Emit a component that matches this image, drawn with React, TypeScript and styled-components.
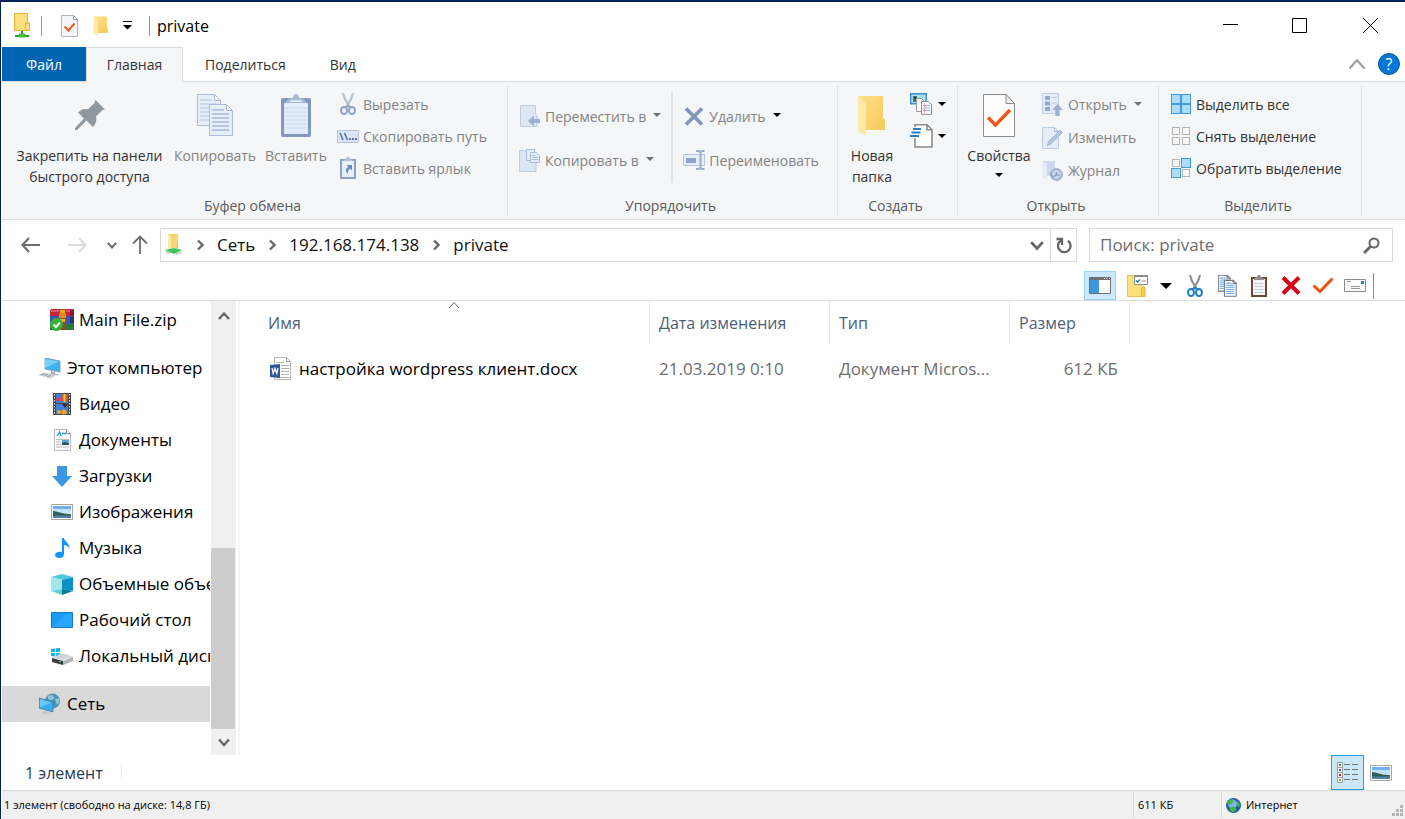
import React from "react";
import styled, { createGlobalStyle, css } from "styled-components";

const GlobalStyle = createGlobalStyle`
  *, *::before, *::after { box-sizing: border-box; }
  body { margin: 0; background: #fff; }
  body, button, input {
    font-family: "Open Sans", "Noto Sans", sans-serif;
  }
  svg { display: block; flex: none; }
`;

const plainButton = css`
  appearance: none;
  border: 0;
  margin: 0;
  padding: 0;
  background: none;
  color: inherit;
  font-size: inherit;
  line-height: inherit;
  cursor: default;
`;

const Window = styled.div`
  display: flex;
  flex-direction: column;
  min-height: 100vh;
  padding-left: 1px;
  border-top: 2px solid #02215a;
  border-left: 1px solid #02215a;
  background: #fff;
  color: #000;
`;

/* ---------- title bar ---------- */

const TitleBar = styled.header`
  display: flex;
  align-items: center;
  height: 45px;
  padding: 2px 0 0 8px;
`;

const QuickButton = styled.button<{ $w: number }>`
  ${plainButton}
  display: flex;
  align-items: center;
  justify-content: center;
  width: ${(p) => p.$w}px;
  height: 30px;
`;

const TitleRule = styled.span`
  width: 1px;
  height: 20px;
  margin: 0 7px;
  background: #969696;
`;

const Title = styled.h1`
  flex: 1;
  margin: 0;
  font-size: 16px;
  line-height: 24px;
  font-weight: 400;
`;

const CaptionButton = styled.button`
  ${plainButton}
  display: flex;
  align-items: center;
  justify-content: center;
  width: 70px;
  height: 40px;
`;

/* ---------- tabs ---------- */

const TabRow = styled.nav`
  display: flex;
  align-items: stretch;
  height: 34px;
  font-size: 14px;
  line-height: 20px;
  color: #333;
`;

const Tab = styled.button<{ $kind?: "file" | "active" }>`
  ${plainButton}
  padding: 1px 22px 0;
  ${(p) =>
    p.$kind === "file" &&
    css`
      width: 84px;
      background: #0066b4;
      color: #fff;
    `}
  ${(p) =>
    p.$kind === "active" &&
    css`
      position: relative;
      width: 97px;
      height: 35px;
      padding: 0;
      background: #f5f6f7;
      border: 1px solid #dadbdc;
      border-bottom: 0;
    `}
`;

const TabTools = styled.div`
  display: flex;
  align-items: center;
  gap: 12px;
  margin-left: auto;
  padding-right: 5px;
`;

const HelpButton = styled.button`
  ${plainButton}
  width: 22px;
  height: 22px;
  border: 1px solid #005a9e;
  border-radius: 50%;
  background: #0078d7;
  color: #fff;
  font-size: 16px;
  line-height: 20px;
  font-weight: 500;
`;

/* ---------- ribbon ---------- */

const Ribbon = styled.section`
  display: flex;
  height: 139px;
  background: #f5f6f7;
  border-top: 1px solid #dadbdc;
  border-bottom: 1px solid #dadbdc;
  font-size: 14px;
  line-height: 21px;
`;

const Group = styled.div<{ $w: number }>`
  display: flex;
  flex-direction: column;
  width: ${(p) => p.$w}px;
  margin: 3px 0;
  border-right: 1px solid #e2e3e4;
`;

const GroupBody = styled.div<{ $pad: number }>`
  display: flex;
  flex: 1;
  padding-left: ${(p) => p.$pad}px;
`;

const GroupLabel = styled.div`
  height: 21px;
  padding-right: 4px;
  text-align: center;
  color: #5a5a5a;
`;

const BigButton = styled.button<{ $w: number; $off?: boolean }>`
  ${plainButton}
  display: flex;
  flex-direction: column;
  align-items: center;
  width: ${(p) => p.$w}px;
  padding-top: 6px;
  color: ${(p) => (p.$off ? "#838383" : "#333")};
  white-space: nowrap;
`;

const BigIcon = styled.span`
  display: flex;
  align-items: center;
  height: 48px;
  margin-bottom: 6px;
`;

const CaretLine = styled.span`
  display: flex;
  align-items: center;
  height: 18px;
`;

const SmallColumn = styled.div<{ $top?: number; $left?: number }>`
  display: flex;
  flex-direction: column;
  align-items: flex-start;
  padding-top: ${(p) => p.$top ?? 3}px;
  padding-left: ${(p) => p.$left ?? 0}px;
`;

const SmallButton = styled.button<{ $h?: number; $off?: boolean }>`
  ${plainButton}
  display: flex;
  align-items: center;
  gap: 5px;
  height: ${(p) => p.$h ?? 32}px;
  color: ${(p) => (p.$off ? "#838383" : "#333")};
  white-space: nowrap;
`;

const IconSlot = styled.span`
  display: flex;
  justify-content: center;
  width: 21px;
`;

const CaretSlot = styled.span`
  display: flex;
  padding: 0 0 2px 2px;
`;

const InnerRule = styled.span`
  width: 2px;
  height: 91px;
  margin: 7px 10px 0 10px;
  background: #e2e3e4;
`;

/* ---------- address row ---------- */

const AddressRow = styled.div`
  display: flex;
  align-items: center;
  height: 50px;
  padding: 0 12px 0 9px;
  color: #111;
`;

const NavButton = styled.button<{ $w: number }>`
  ${plainButton}
  display: flex;
  align-items: center;
  justify-content: center;
  width: ${(p) => p.$w}px;
  height: 32px;
`;

const PathBox = styled.div`
  display: flex;
  flex: 1;
  align-items: center;
  height: 34px;
  padding-left: 4px;
  border: 1px solid #d9d9d9;
`;

const Crumb = styled.button`
  ${plainButton}
  font-size: 17px;
  line-height: 24px;
`;

const CrumbSep = styled.span`
  display: flex;
  justify-content: center;
  width: 34px;
`;

const PathButtons = styled.div`
  display: flex;
  margin-left: auto;
`;

const PathButton = styled.button<{ $rule?: boolean }>`
  ${plainButton}
  display: flex;
  align-items: center;
  justify-content: center;
  width: 26px;
  height: 32px;
  border-left: ${(p) => (p.$rule ? "1px solid #d9d9d9" : "0")};
`;

const SearchBox = styled.label`
  display: flex;
  align-items: center;
  width: 304px;
  height: 34px;
  margin-left: 12px;
  padding: 0 12px 0 10px;
  border: 1px solid #d9d9d9;
`;

const SearchInput = styled.input`
  flex: 1;
  min-width: 0;
  padding: 0;
  border: 0;
  outline: 0;
  background: none;
  font-size: 17px;
  line-height: 24px;
  &::placeholder { color: #6d6d6d; opacity: 1; }
`;

/* ---------- command bar ---------- */

const CommandBar = styled.div`
  display: flex;
  justify-content: flex-end;
  align-items: flex-end;
  height: 31px;
  padding-right: 31px;
  border-bottom: 1px solid #dadbdc;
`;

const CommandButton = styled.button<{ $active?: boolean; $wide?: boolean }>`
  ${plainButton}
  display: flex;
  align-items: center;
  justify-content: center;
  gap: 11px;
  width: ${(p) => (p.$wide ? 63 : 32)}px;
  height: 29px;
  padding-left: ${(p) => (p.$wide ? 3 : 0)}px;
  ${(p) =>
    p.$active &&
    css`
      background: #cce8ff;
      border: 1px solid #99d1ff;
    `}
`;

const CommandRule = styled.span`
  width: 1px;
  height: 26px;
  margin: 0 0 1px 2px;
  background: #8c8c8c;
`;

/* ---------- body ---------- */

const Body = styled.div`
  display: flex;
  flex: 1;
  min-height: 0;
`;

const Tree = styled.ul`
  width: 208px;
  margin: 0;
  padding: 1px 0 0;
  list-style: none;
  overflow: hidden;
`;

const TreeItem = styled.li<{ $gap?: boolean }>`
  margin-top: ${(p) => (p.$gap ? 12 : 0)}px;
`;

const TreeButton = styled.button<{ $root?: boolean; $selected?: boolean }>`
  ${plainButton}
  display: flex;
  align-items: center;
  gap: 5px;
  width: 100%;
  height: 36px;
  padding-left: ${(p) => (p.$root ? 36 : 48)}px;
  background: ${(p) => (p.$selected ? "#d9d9d9" : "none")};
  font-size: 17px;
  line-height: 24px;
  white-space: nowrap;
`;

const TreeIcon = styled.span`
  display: flex;
  flex: none;
  justify-content: center;
  width: 24px;
`;

const Scrollbar = styled.div`
  display: flex;
  flex-direction: column;
  width: 25px;
  margin-left: 1px;
  background: #f0f0f0;
`;

const ScrollButton = styled.button<{ $h: number }>`
  ${plainButton}
  display: flex;
  align-items: center;
  justify-content: center;
  height: ${(p) => p.$h}px;
`;

const ScrollSpace = styled.span`
  flex: 217;
`;

const ScrollThumb = styled.span`
  flex: 181;
  margin-right: 1px;
  background: #cdcdcd;
`;

const Splitter = styled.div`
  width: 2px;
  margin-left: 2px;
  background: #f5f5f5;
`;

const FilePane = styled.main`
  flex: 1;
  min-width: 0;
`;

const FileTable = styled.table`
  width: 890px;
  table-layout: fixed;
  border-collapse: separate;
  border-spacing: 0;
  font-size: 17px;
  line-height: 24px;
`;

const HeadCell = styled.th<{ $w: number; $first?: boolean }>`
  position: relative;
  width: ${(p) => p.$w}px;
  height: 42px;
  padding: 2px 9px 0 ${(p) => (p.$first ? 28 : 9)}px;
  border-right: 1px solid #e5e5e5;
  color: #4c607a;
  font-size: 16px;
  font-weight: 400;
  text-align: left;
  white-space: nowrap;
`;

const SortMark = styled.span`
  position: absolute;
  top: -2px;
  left: 208px;
`;

const Cell = styled.td<{ $name?: boolean; $right?: boolean }>`
  height: 51px;
  padding: 0 ${(p) => (p.$right ? 12 : 9)}px 0 ${(p) => (p.$name ? 30 : 9)}px;
  color: ${(p) => (p.$name ? "#000" : "#6d6d6d")};
  text-align: ${(p) => (p.$right ? "right" : "left")};
  white-space: nowrap;
`;

const FileName = styled.a`
  display: flex;
  align-items: center;
  gap: 7px;
  color: inherit;
  text-decoration: none;
`;

/* ---------- footers ---------- */

const DetailsBar = styled.div`
  display: flex;
  align-items: center;
  height: 36px;
  padding: 0 13px 0 23px;
  border-bottom: 1px solid #d7d7d7;
  color: #26395a;
  font-size: 16px;
  line-height: 24px;
`;

const DetailsRule = styled.span`
  width: 1px;
  height: 17px;
  margin-left: 18px;
  background: #f0f0f0;
`;

const ViewButtons = styled.div`
  display: flex;
  align-items: center;
  gap: 6px;
  margin-left: auto;
`;

const ViewButton = styled.button<{ $active?: boolean }>`
  ${plainButton}
  display: flex;
  align-items: center;
  justify-content: center;
  height: 35px;
  ${(p) =>
    p.$active &&
    css`
      width: 33px;
      background: #cbe8f6;
      border: 1px solid #26a0da;
    `}
`;

const StatusBar = styled.footer`
  display: flex;
  align-items: center;
  height: 28px;
  padding-left: 2px;
  background: #f0f0f0;
  font-size: 11px;
  line-height: 16px;
`;

const StatusText = styled.span`
  flex: 1;
`;

const StatusField = styled.span<{ $w: number }>`
  display: flex;
  align-items: center;
  gap: 5px;
  width: ${(p) => p.$w}px;
  height: 26px;
  padding-left: 4px;
  border-left: 1px solid #d7d7d7;
`;

const GripSlot = styled.span`
  align-self: flex-end;
  margin-left: auto;
  padding: 0 2px 2px 0;
`;

/* ---------- icons ---------- */

const Caret = ({ color = "#000", w = 8 }: { color?: string; w?: number }) => (
  <svg width={w} height={w === 8 ? 4 : 6} viewBox={w === 8 ? "0 0 8 4" : "0 0 12 6"} fill={color}>
    <path d={w === 8 ? "M0 0h8L4 4z" : "M0 0h12L6 6z"} />
  </svg>
);

const Chevron = ({
  dir,
  color = "#666",
  size = 12,
  stroke = 2.4,
}: {
  dir: "up" | "down" | "right";
  color?: string;
  size?: number;
  stroke?: number;
}) => {
  const d = { up: "M1 9l5-5.500L11 9", down: "M1 3.500L6 9l5-5.500", right: "M4 1.500L8.500 6 4 10.500" }[dir];
  return (
    <svg width={size} height={size} viewBox="0 0 12 12" fill="none" stroke={color} strokeWidth={stroke}>
      <path d={d} />
    </svg>
  );
};

const DriveFolderIcon = () => (
  <svg width="16" height="25" viewBox="0 0 16 25">
    <path d="M7 18h2v4H7z" fill="#1f9a2a" />
    <path d="M1 22h14v2H1z" fill="#23a123" />
    <path d="M5 20.500h6v4H5z" fill="#45c13c" />
    <path d="M.5.500h13v17H.5z" fill="#fde07a" stroke="#e3b53c" />
    <path d="M11.500 10.500h2.500l1.500-1v8h-4z" fill="#fbe08a" stroke="#e3b53c" />
  </svg>
);

const CheckDocIcon = ({ big }: { big?: boolean }) =>
  big ? (
    <svg width="34" height="43" viewBox="0 0 34 43">
      <path d="M1.500.500h22.500l8.500 9V42.500h-31z" fill="#fcfcfd" stroke="#8c8c8c" />
      <path d="M24 .500v9h8.500z" fill="#eee" stroke="#8c8c8c" />
      <path d="M6 23.500l7.500 7.500L28 16" fill="none" stroke="#f0591a" strokeWidth="3.500" />
    </svg>
  ) : (
    <svg width="17" height="22" viewBox="0 0 17 22">
      <path d="M.5.500h12l4 4v17H.5z" fill="#f4f5f8" stroke="#b4b4b8" />
      <path d="M12.500.500v4h4z" fill="#fff" stroke="#a0a0a4" />
      <path d="M3.500 11.500l4 4 6-7" fill="none" stroke="#f0591a" strokeWidth="2" />
    </svg>
  );

const FolderIcon = ({ big }: { big?: boolean }) => (
  <svg width={big ? 30 : 16} height={big ? 41 : 20} viewBox="0 0 30 41" preserveAspectRatio="none">
    <defs>
      <linearGradient id={big ? "folderBig" : "folderSmall"} x1="0" y1="0" x2="1" y2="1">
        <stop offset="0" stopColor="#fee08a" />
        <stop offset="1" stopColor="#f5ca5c" />
      </linearGradient>
    </defs>
    <path d="M1 1h25v22l2 1v11H9z" fill={`url(#${big ? "folderBig" : "folderSmall"})`} />
    <path d="M1 1l8 7v33l-8-5z" fill="#fee9a8" />
  </svg>
);

const CustomizeIcon = () => (
  <svg width="9" height="9" viewBox="0 0 9 9">
    <path d="M0 0h9v1H0zM0 4h9L4.500 8.500z" />
  </svg>
);

const PinIcon = () => (
  <svg width="30" height="30" viewBox="0 0 30 30" fill="#8f989f">
    <path d="M20.500 0L30 9.500l-2.500.500-6.500 6.500c1 4 0 7-3 10.500L11.500 20.500 2 30H0v-2l9-9.500L3 12.500c3-3 6-4 10-3.200L19.500 3z" />
  </svg>
);

const CopyIcon = ({ vivid, big }: { vivid?: boolean; big?: boolean }) => {
  const edge = vivid ? "#6f7780" : "#a9bbd8";
  const ink = vivid ? "#3f8ce0" : "#b4c4de";
  const sheet = (x: number, y: number, line: string) => (
    <g transform={`translate(${x} ${y})`}>
      <path d="M.5.500h17l6 6v25H.5z" fill={vivid ? "#fff" : "#e6eef9"} stroke={edge} strokeWidth={big ? 1 : 2} />
      <path d="M17.500.500v6h6z" fill="#fff" stroke={edge} strokeWidth={big ? 1 : 2} />
      <path d="M3 6h12M3 10h17M3 14h17M3 18h17M3 22h17M3 26h17" stroke={line} strokeWidth={big ? 1 : 1.6} />
    </g>
  );
  return (
    <svg width={big ? 37 : 19} height={big ? 43 : 22} viewBox="0 0 37 43">
      {sheet(0, 0, ink)}
      {sheet(12, 10, vivid ? "#3f8ce0" : "#8b9fc0")}
    </svg>
  );
};

const PasteIcon = () => (
  <svg width="30" height="43" viewBox="0 0 30 43">
    <rect x="0" y="4" width="30" height="39" rx="2" fill="#8498bf" />
    <path d="M3 9h24v31H3z" fill="#e3ecfa" />
    <path d="M3 14h24M3 18h24M3 22h24M3 26h24M3 30h24M3 34h24" stroke="#cddaf0" />
    <path d="M5 9c0-3 3-5 7-5 0-2 1-4 3-4s3 2 3 4c4 0 7 2 7 5z" fill="#a9b9d6" />
    <path d="M8 8h14l-2-2H10z" fill="#dfe8f6" />
  </svg>
);

const ScissorsIcon = ({ vivid }: { vivid?: boolean }) => (
  <svg width="16" height="22" viewBox="0 0 16 22" fill="none">
    <path d="M3 0l1.500 5L9.500 14M13 0l-1.500 5L6.500 14" stroke={vivid ? "#8a9299" : "#b3bfd2"} strokeWidth="2.200" />
    <g stroke={vivid ? "#1d7fc4" : "#8fa3c6"} strokeWidth="2">
      <ellipse cx="4" cy="17.500" rx="3" ry="3.500" />
      <ellipse cx="12" cy="17.500" rx="3" ry="3.500" />
      <path d="M5.500 14.500L8 12.500l2.500 2" />
    </g>
  </svg>
);

const PathIcon = () => (
  <svg width="22" height="13" viewBox="0 0 22 13">
    <path d="M.5.500h21v12H.5z" fill="#dae5f5" stroke="#b5c5df" />
    <path d="M3 3l3 7M7.500 3l3 7" stroke="#5d76a4" strokeWidth="1.600" />
    <path d="M12 8h2v2h-2zM15 8h2v2h-2zM18 8h2v2h-2z" fill="#5d76a4" />
  </svg>
);

const ShortcutIcon = () => (
  <svg width="16" height="22" viewBox="0 0 16 22">
    <path d="M1 3h14v18H1z" fill="#e6effb" stroke="#8ea2c6" strokeWidth="2" />
    <path d="M4 4c0-2 2-2 3-4h2c1 2 3 2 3 4z" fill="#b2c0da" />
    <path d="M6.500 8H12v5.500l-2-2c-2 1.500-2.500 3-2 5.500-3-3-2.500-5.500.5-7.300z" fill="#6f87b3" />
  </svg>
);

const MoveIcon = () => (
  <svg width="20" height="22" viewBox="0 0 20 22">
    <path d="M.5.500h15v9l1.500 1v11H.5z" fill="#dbe6f6" stroke="#bccbe3" />
    <path d="M8 16l6-5.500V14h6v4h-6v3.500z" fill="#9fb1d0" />
  </svg>
);

const CopyToIcon = () => (
  <svg width="21" height="23" viewBox="0 0 21 23">
    <path d="M.5 1.500h15v9l1.500 1v11H.5z" fill="#dbe6f6" stroke="#bccbe3" />
    <path d="M7.500.500h8v11h-8z" fill="#e6eef9" stroke="#a9bbd8" />
    <path d="M11.500 3.500h6l3 3v7h-9z" fill="#e6eef9" stroke="#a9bbd8" />
    <path d="M13 8.500h6M13 10.500h6M13 6.500h3" stroke="#a9bbd8" />
  </svg>
);

const CrossIcon = ({ color = "#8095bb", thick = 3.6 }: { color?: string; thick?: number }) => (
  <svg width="20" height="19" viewBox="0 0 20 19" stroke={color} strokeWidth={thick}>
    <path d="M2 1.500l16 16M18 1.500l-16 16" />
  </svg>
);

const RenameIcon = () => (
  <svg width="22" height="20" viewBox="0 0 22 20">
    <path d="M.5 4.500h21v11H.5z" fill="#e6eefa" stroke="#b5c5df" />
    <path d="M3 8h10v5H3z" fill="#8fa3c8" />
    <path d="M13 1h3l1.500 1 1.500-1h2.500M13 19h3l1.500-1 1.500 1h2.500M17.500 1.500v17" fill="none" stroke="#9cadca" strokeWidth="2" />
  </svg>
);

const NewItemIcon = () => (
  <svg width="23" height="22" viewBox="0 0 23 22">
    <path d="M.7.700h15.600v10H.7z" fill="#a8dcf7" stroke="#3c8fc7" strokeWidth="1.400" />
    <path d="M3 3h4v6H3z" fill="#3f7d5c" />
    <path d="M4 4h2v2H4z" fill="#4a3020" />
    <path d="M6.500 5.500h5l3 3v10h-8z" fill="#fff" stroke="#999" />
    <path d="M11.500 8.500h7l3 3v9.800h-10z" fill="#fff" stroke="#8c8c8c" />
    <path d="M13 12.500h7M13 15h7M13 17.500h7" stroke="#7db4ea" />
    <path d="M14.500 10v10" stroke="#e8a0a0" />
  </svg>
);

const EasyAccessIcon = () => (
  <svg width="23" height="24" viewBox="0 0 23 24">
    <path d="M5 .800h12l5 5v17.200H5z" fill="#fff" stroke="#8c8c8c" strokeWidth="1.600" />
    <path d="M17 .800v5h5" fill="none" stroke="#8c8c8c" strokeWidth="1.600" />
    <path d="M2 3h9v11H0V4z" fill="#f9fafb" />
    <path d="M3 5h8M1.500 8.500h9M0 12h9" stroke="#2e7ab8" strokeWidth="2" />
  </svg>
);

const OpenIcon = () => (
  <svg width="21" height="23" viewBox="0 0 21 23">
    <path d="M.5.500h16v20H.5z" fill="#e4edf9" stroke="#bccbe3" />
    <path d="M3 3h5v4H3zM3 8.500h5v4H3zM3 14h5v4H3z" fill="#93a7ca" />
    <path d="M10 4.500h5M10 10h5" stroke="#bccbe3" />
    <path d="M15.500 11l5.500 6h-3.300v6h-4.400v-6H10z" fill="#9fb1d0" />
  </svg>
);

const EditIcon = () => (
  <svg width="21" height="22" viewBox="0 0 21 22">
    <path d="M.5.500h12l4 4v17H.5z" fill="#e4edf9" stroke="#bccbe3" />
    <path d="M12.500.500v4h4" fill="none" stroke="#a9bbd8" />
    <path d="M5 19l2-5L18 3l2.500 2.500-11 11z" fill="#b4c4de" stroke="#9fb1d0" strokeWidth=".8" />
  </svg>
);

const HistoryIcon = () => (
  <svg width="21" height="21" viewBox="0 0 21 21">
    <path d="M0 1h13v15H5z" fill="#ccd9ee" />
    <path d="M0 1l5 3v16l-5-3z" fill="#e4edf9" />
    <circle cx="14.500" cy="14.500" r="5.500" fill="#c9d6ea" stroke="#9fb1d0" strokeWidth="1.800" />
    <path d="M8 13l3 4 3-2M14.500 12v3h3" fill="none" stroke="#8b9fc0" strokeWidth="1.400" />
  </svg>
);

const TilesIcon = ({ on }: { on: boolean[] }) => {
  const spots = [[0, 0], [10, 0], [0, 10], [10, 10]];
  return (
    <svg width="20" height="20" viewBox="0 0 20 20">
      {spots.map(([x, y], i) =>
        on[i] ? (
          <rect key={i} x={x + 0.5} y={y + 0.5} width="9" height="9" fill="#b0dcfb" stroke="#3f9be0" />
        ) : (
          <rect key={i} x={x + 1.5} y={y + 1.5} width="7" height="7" fill="#f8f8f8" stroke="#b3b3b3" />
        )
      )}
    </svg>
  );
};

const ArrowIcon = ({ dir, color = "#6e6e6e" }: { dir: "left" | "right" | "up"; color?: string }) =>
  dir === "up" ? (
    <svg width="16" height="20" viewBox="0 0 16 20" fill="none" stroke={color} strokeWidth="1.800">
      <path d="M8 19V1.500M1 8.500l7-7 7 7" />
    </svg>
  ) : (
    <svg width="20" height="16" viewBox="0 0 20 16" fill="none" stroke={color} strokeWidth="2.200">
      <path d={dir === "left" ? "M19 8H2M8 1L1.500 8 8 15" : "M1 8h17M12 1l6.500 7L12 15"} />
    </svg>
  );

const NetFolderIcon = () => (
  <svg width="18" height="22" viewBox="0 0 18 22">
    <path d="M3 0h10v14H6z" fill="#f9d56d" />
    <path d="M3 0l3 3v14l-3-2z" fill="#fee9a8" />
    <path d="M12 9h1v6h-1z" fill="#e9bd4c" />
    <path d="M0 16l9-2 8 2-8 4z" fill="#3fc45a" />
    <path d="M1 18l4 1M11 20l5-1.500" stroke="#b9c4c8" strokeWidth="1.600" />
  </svg>
);

const RefreshIcon = () => (
  <svg width="16" height="17" viewBox="0 0 16 17" fill="none" stroke="#666" strokeWidth="2.300">
    <path d="M5 3.500A6.300 6.300 0 1 0 12 3.800" />
    <path d="M.5 2h5.500v6" />
  </svg>
);

const SearchIcon = () => (
  <svg width="17" height="17" viewBox="0 0 17 17" fill="none" stroke="#666">
    <circle cx="11" cy="6" r="4.500" strokeWidth="2" />
    <path d="M7.500 9.500l-6.500 6.500" strokeWidth="2.800" />
  </svg>
);

const PaneIcon = () => (
  <svg width="22" height="17" viewBox="0 0 22 17">
    <path d="M.5.500h21v16H.5z" fill="#fff" stroke="#707070" />
    <path d="M0 0h22v3H0z" fill="#707070" />
    <path d="M15 1h1v1h-1zM17.500 1h1v1h-1zM20 1h1v1h-1z" fill="#fff" />
    <path d="M1 3h9v13H1z" fill="#3f97dd" />
  </svg>
);

const FolderOptionsIcon = () => (
  <svg width="22" height="22" viewBox="0 0 22 22">
    <path d="M.5.500h14v10l3 2v9H.5z" fill="#fde07a" stroke="#e8c455" />
    <path d="M14.500 13.500l2-2 1.500 1.500v8.500h-3.500z" fill="#f8d050" stroke="#e3b53c" />
    <path d="M7.500.500h13v9h-13z" fill="#fff" stroke="#8c8c8c" />
    <path d="M7 0h14v2H7z" fill="#8c8c8c" />
    <path d="M9 5.500l1.500 1.500L13 4.500" fill="none" stroke="#2e7ab8" strokeWidth="1.500" />
    <path d="M14.500 6h4.500" stroke="#999" />
  </svg>
);

const ClipboardIcon = () => (
  <svg width="16" height="22" viewBox="0 0 16 22">
    <path d="M0 2h16v20H0z" fill="#6b4a2e" />
    <path d="M2 4h12v16H2z" fill="#f6f8fb" />
    <path d="M3.500 8.500h9M3.500 11.500h9M3.500 14.500h9M3.500 17.500h9" stroke="#c5ccd6" />
    <path d="M3 5c0-3 3-2 4-5h2c1 3 4 2 4 5z" fill="#8b8f94" />
  </svg>
);

const TickIcon = () => (
  <svg width="22" height="17" viewBox="0 0 22 17" fill="none" stroke="#f0500f" strokeWidth="3">
    <path d="M1.500 8.500l6.500 6L20.500 1.500" />
  </svg>
);

const MailIcon = () => (
  <svg width="22" height="13" viewBox="0 0 22 13">
    <path d="M.5.500h21v12H.5z" fill="#fafafa" stroke="#8c8c8c" />
    <path d="M3 2.500h4M7 7.500h9M7 9.500h9" stroke="#9a9a9a" />
    <path d="M17 2h3v3h-3z" fill="#1e88e0" />
  </svg>
);

const ArchiveIcon = () => (
  <svg width="24" height="22" viewBox="0 0 24 22">
    <path d="M1 0h23v8H0V2z" fill="#c7243c" />
    <path d="M1 1h22v2H1z" fill="#e0556a" />
    <path d="M0 7h24v8H0z" fill="#3d56a8" />
    <path d="M0 15h24v6H0z" fill="#267a35" />
    <path d="M20 1h4v6h-4z" fill="#8a1830" />
    <path d="M20 8h4v6h-4z" fill="#2b2f6c" />
    <path d="M9 0h7v21H9z" fill="#8d4b22" />
    <path d="M10 1h5v3h-5zM10 10h5v3h-5z" fill="#f6ad22" />
    <path d="M9 4h7v5H9z" fill="#e5882a" />
    <circle cx="6.500" cy="15.500" r="6.500" fill="#35b233" />
    <path d="M3.500 15.500l2.500 2.500 4-4.500" fill="none" stroke="#fff" strokeWidth="2" />
  </svg>
);

const ComputerIcon = () => (
  <svg width="24" height="21" viewBox="0 0 24 21">
    <path d="M7 0l15 3v11L7 11z" fill="#3fb2f2" stroke="#7f93a5" strokeWidth=".8" />
    <path d="M7 1l14 2.500L7 10z" fill="#79cdfa" />
    <path d="M13 13l4 1v2h3v1.500l-7-1z" fill="#a9b2ba" />
    <path d="M0 17l6-2.500 12 2.500-5 3.500z" fill="#c8ced3" />
    <path d="M3 17l4-1.500M6 18l4-1.700M9 19l4-1.800" stroke="#99a2aa" />
  </svg>
);

const VideoIcon = () => (
  <svg width="18" height="22" viewBox="0 0 18 22">
    <path d="M0 0h18v22H0z" fill="#4a4a4a" />
    <path d="M3 1h12v9H3zM3 11h12v10H3z" fill="#4180d8" />
    <path d="M3 5l3-1 3 2v2H3z" fill="#c0457a" />
    <ellipse cx="11.500" cy="5" rx="3.500" ry="4" fill="#d0572a" />
    <path d="M10.500 1h2v8h-2z" fill="#f1c92c" />
    <path d="M9 11h6l-3 4z" fill="#3a2a20" />
    <circle cx="6" cy="19" r="2" fill="#f2a31c" />
    <circle cx="11" cy="19" r="2.500" fill="#f2a31c" />
    <path d="M1.500 1v21M16.500 1v21" stroke="#e8e8e8" strokeDasharray="1.500 1.500" />
  </svg>
);

const DocumentsIcon = () => (
  <svg width="17" height="22" viewBox="0 0 17 22">
    <path d="M.5.500h12l4 4v17H.5z" fill="#f7f9fa" stroke="#b4b9bd" />
    <path d="M12.500.500v4h4" fill="none" stroke="#8c9196" />
    <path d="M3 7l2.500-4L7 7M8 4.500h4" fill="none" stroke="#29a0d8" strokeWidth="1.400" />
    <path d="M2 10.500h13M2 13h5M2 15.500h5M2 18h13" stroke="#b9bfc4" />
    <path d="M8 11h7v5H8z" fill="#5fa3d6" />
    <path d="M8 14l3-1 4 1.500V16H8z" fill="#2c5560" />
  </svg>
);

const DownloadIcon = () => (
  <svg width="20" height="21" viewBox="0 0 20 21">
    <path d="M5 0h10v10h5L10 21 0 10h5z" fill="#3c96e4" />
  </svg>
);

const PictureIcon = () => (
  <svg width="22" height="16" viewBox="0 0 22 16">
    <path d="M.5.500h21v15H.5z" fill="#fff" stroke="#a6a6a6" />
    <path d="M2 2h18v5H2z" fill="#6fb0f0" />
    <path d="M2 5h18v4H2z" fill="#c3e2f7" />
    <path d="M2 7c4 0 8 3 18 3v2H2z" fill="#2f5f54" />
    <path d="M2 11.500h18V14H2z" fill="#4f84a6" />
  </svg>
);

const MusicIcon = () => (
  <svg width="15" height="20" viewBox="0 0 15 20" fill="#0d96fb">
    <path d="M7 0h2c.5 4 6 5 5.500 11-.5-2-2-3.500-5.500-4v9c0 2.500-2 4-4.500 4S0 18.800 0 17c0-2.500 3.500-4 7-2.800z" />
  </svg>
);

const CubeIcon = () => (
  <svg width="22" height="21" viewBox="0 0 22 21">
    <path d="M0 3l11-3 11 3-11 3z" fill="#4fc9dc" />
    <path d="M0 3l11 3v9L0 17z" fill="#a5e6ec" />
    <path d="M22 3L11 6v9l11 2z" fill="#0a93c4" />
    <path d="M0 17l11-2v6z" fill="#5fd0dc" />
    <path d="M22 17l-11-2v6z" fill="#067a94" />
  </svg>
);

const DesktopIcon = () => (
  <svg width="22" height="16" viewBox="0 0 22 16">
    <path d="M.5.500h21v15H.5z" fill="#189cfa" stroke="#1478c4" />
    <path d="M1 15L16 1h5v14z" fill="#3aaeff" opacity=".5" />
  </svg>
);

const DiskIcon = () => (
  <svg width="22" height="17" viewBox="0 0 22 17">
    <path d="M0 1l4-.6V4H0zM5 .300L9 0v4H5zM0 5h4v3.600L0 8zM5 5h4v4l-4-.4z" fill="#1cb2ec" />
    <path d="M1 10l8-4h6l7 3-10 3z" fill="#d3d6d8" />
    <path d="M1 10l11 3v4L1 14z" fill="#3a3d3f" />
    <path d="M12 13l10-4v4l-10 4z" fill="#aeb2b5" />
    <path d="M8 13l2 .5v1L8 14z" fill="#6fe06a" />
  </svg>
);

const NetworkIcon = () => (
  <svg width="22" height="22" viewBox="0 0 22 22">
    <circle cx="13.500" cy="8" r="7.500" fill="#4d93b8" />
    <path d="M9 3c3-2 5-1 6 1s-1 3-3 3-4-2-3-4zM16 6l4-1c1 3 0 5-2 7z" fill="#8ec4d8" />
    <path d="M0 5l14 4v10L0 15z" fill="#3aaef5" stroke="#3f78a0" strokeWidth=".8" />
    <path d="M1 6.500l12 3L1 14z" fill="#71c8fb" />
    <path d="M6 18l2 .5v1l4 1-5 1-4-1.500z" fill="#bdc6cc" />
  </svg>
);

const WordIcon = () => (
  <svg width="22" height="23" viewBox="0 0 22 23">
    <path d="M4.500.500h12l4 4v18h-16z" fill="#fff" stroke="#b8b8b8" />
    <path d="M16.500.500v4h4" fill="none" stroke="#9c9c9c" />
    <path d="M6 5.500h8M11 8.500h8M11 11.500h8M11 14.500h8M11 17.500h8M6 20.500h13" stroke="#b2b2b2" />
    <path d="M0 8l10-1v14L0 20z" fill="#2b579a" />
    <path d="M2 11l1.200 5.500L5 11.500l1.800 5L8 11" fill="none" stroke="#fff" strokeWidth="1.300" />
  </svg>
);

const DetailsViewIcon = () => (
  <svg width="22" height="22" viewBox="0 0 22 22">
    {[0, 5, 10, 15].map((y, i) => (
      <g key={y}>
        <path d={`M.5 ${y + 0.5}h5v5h-5z`} fill="#fff" stroke="#9a9a9a" />
        <path d={`M2 ${y + 2}h2v2h-2z`} fill={["#3b7f66", "#3a5fc0", "#c42222", "#8f9a4a"][i]} />
        <path d={`M7 ${y + 2.5}h6M15 ${y + 2.5}h6`} stroke="#707070" />
      </g>
    ))}
  </svg>
);

const GlobeIcon = () => (
  <svg width="15" height="15" viewBox="0 0 15 15">
    <circle cx="7.500" cy="7.500" r="7.500" fill="#1f5fae" />
    <circle cx="6.500" cy="6" r="4.500" fill="#7fb6e6" />
    <path d="M1 4c2-3 5-3 6-2s-1 3-2 4-3 1-4-2zM4 10c2-2 5-1 6 0s-1 4-3 4-4-2-3-4zM11 3c2 1 3 3 3 5l-2 1c-1-2-2-4-1-6z" fill="#45b53b" />
  </svg>
);

const GripIcon = () => (
  <svg width="11" height="11" viewBox="0 0 11 11" fill="#b4b4b4">
    <path d="M8 0h3v3H8zM4 4h3v3H4zM8 4h3v3H8zM0 8h3v3H0zM4 8h3v3H4zM8 8h3v3H8z" />
  </svg>
);

const MinimizeIcon = () => (
  <svg width="15" height="15" viewBox="0 0 15 15"><path d="M0 6h15v1H0z" /></svg>
);
const MaximizeIcon = () => (
  <svg width="16" height="16" viewBox="0 0 16 16" fill="none" stroke="#000"><path d="M.5.500h14v14H.5z" /></svg>
);
const CloseIcon = () => (
  <svg width="15" height="15" viewBox="0 0 15 15" fill="none" stroke="#000"><path d="M0 0l15 15M15 0L0 15" /></svg>
);

/* ---------- data ---------- */

const treeItems = [
  { label: "Main File.zip", icon: <ArchiveIcon /> },
  { label: "Этот компьютер", icon: <ComputerIcon />, root: true, gap: true },
  { label: "Видео", icon: <VideoIcon /> },
  { label: "Документы", icon: <DocumentsIcon /> },
  { label: "Загрузки", icon: <DownloadIcon /> },
  { label: "Изображения", icon: <PictureIcon /> },
  { label: "Музыка", icon: <MusicIcon /> },
  { label: "Объемные объе", icon: <CubeIcon /> },
  { label: "Рабочий стол", icon: <DesktopIcon /> },
  { label: "Локальный диск", icon: <DiskIcon /> },
  { label: "Сеть", icon: <NetworkIcon />, root: true, gap: true, selected: true },
];

const Small = ({
  icon,
  label,
  caret,
  off,
  h,
}: {
  icon: React.ReactNode;
  label: string;
  caret?: string;
  off?: boolean;
  h?: number;
}) => (
  <SmallButton $off={off} $h={h}>
    <IconSlot>{icon}</IconSlot>
    {label}
    {caret && <CaretSlot><Caret color={caret} /></CaretSlot>}
  </SmallButton>
);

export default function App() {
  return (
    <>
      <GlobalStyle />
      <Window>
        <TitleBar>
          <QuickButton $w={24} aria-label="private"><DriveFolderIcon /></QuickButton>
          <TitleRule />
          <QuickButton $w={40} aria-label="Свойства"><CheckDocIcon /></QuickButton>
          <QuickButton $w={24} aria-label="Новая папка"><FolderIcon /></QuickButton>
          <QuickButton $w={29} aria-label="Настройка панели быстрого доступа"><CustomizeIcon /></QuickButton>
          <TitleRule />
          <Title>private</Title>
          <CaptionButton aria-label="Свернуть"><MinimizeIcon /></CaptionButton>
          <CaptionButton aria-label="Развернуть"><MaximizeIcon /></CaptionButton>
          <CaptionButton aria-label="Закрыть"><CloseIcon /></CaptionButton>
        </TitleBar>

        <TabRow>
          <Tab $kind="file">Файл</Tab>
          <Tab $kind="active">Главная</Tab>
          <Tab>Поделиться</Tab>
          <Tab>Вид</Tab>
          <TabTools>
            <QuickButton $w={18} aria-label="Свернуть ленту">
              <Chevron dir="up" color="#a0a0a0" size={18} stroke={1.5} />
            </QuickButton>
            <HelpButton>?</HelpButton>
          </TabTools>
        </TabRow>

        <Ribbon>
          <Group $w={506}>
            <GroupBody $pad={8}>
              <BigButton $w={159}>
                <BigIcon><PinIcon /></BigIcon>
                Закрепить на панели<br />быстрого доступа
              </BigButton>
              <BigButton $w={92} $off>
                <BigIcon><CopyIcon big /></BigIcon>
                Копировать
              </BigButton>
              <BigButton $w={70} $off>
                <BigIcon><PasteIcon /></BigIcon>
                Вставить
              </BigButton>
              <SmallColumn $left={6}>
                <Small off icon={<ScissorsIcon />} label="Вырезать" />
                <Small off icon={<PathIcon />} label="Скопировать путь" />
                <Small off icon={<ShortcutIcon />} label="Вставить ярлык" />
              </SmallColumn>
            </GroupBody>
            <GroupLabel>Буфер обмена</GroupLabel>
          </Group>

          <Group $w={330}>
            <GroupBody $pad={11}>
              <SmallColumn $top={9}>
                <Small off h={44} icon={<MoveIcon />} label="Переместить в" caret="#707070" />
                <Small off h={44} icon={<CopyToIcon />} label="Копировать в" caret="#707070" />
              </SmallColumn>
              <InnerRule />
              <SmallColumn $top={9}>
                <Small off h={44} icon={<CrossIcon />} label="Удалить" caret="#000" />
                <Small off h={44} icon={<RenameIcon />} label="Переименовать" />
              </SmallColumn>
            </GroupBody>
            <GroupLabel>Упорядочить</GroupLabel>
          </Group>

          <Group $w={120}>
            <GroupBody $pad={4}>
              <BigButton $w={60}>
                <BigIcon><FolderIcon big /></BigIcon>
                Новая<br />папка
              </BigButton>
              <SmallColumn $left={8}>
                <SmallButton aria-label="Создать элемент"><NewItemIcon /><Caret /></SmallButton>
                <SmallButton aria-label="Простой доступ"><EasyAccessIcon /><Caret /></SmallButton>
              </SmallColumn>
            </GroupBody>
            <GroupLabel>Создать</GroupLabel>
          </Group>

          <Group $w={201}>
            <GroupBody $pad={4}>
              <BigButton $w={74}>
                <BigIcon><CheckDocIcon big /></BigIcon>
                Свойства
                <CaretLine><Caret /></CaretLine>
              </BigButton>
              <SmallColumn $left={6}>
                <Small off h={33} icon={<OpenIcon />} label="Открыть" caret="#707070" />
                <Small off h={33} icon={<EditIcon />} label="Изменить" />
                <Small off h={33} icon={<HistoryIcon />} label="Журнал" />
              </SmallColumn>
            </GroupBody>
            <GroupLabel>Открыть</GroupLabel>
          </Group>

          <Group $w={203}>
            <GroupBody $pad={11}>
              <SmallColumn>
                <Small icon={<TilesIcon on={[true, true, true, true]} />} label="Выделить все" />
                <Small icon={<TilesIcon on={[false, false, false, false]} />} label="Снять выделение" />
                <Small icon={<TilesIcon on={[false, true, true, false]} />} label="Обратить выделение" />
              </SmallColumn>
            </GroupBody>
            <GroupLabel>Выделить</GroupLabel>
          </Group>
        </Ribbon>

        <AddressRow>
          <NavButton $w={40} aria-label="Назад"><ArrowIcon dir="left" /></NavButton>
          <NavButton $w={52} aria-label="Вперёд"><ArrowIcon dir="right" color="#dcdcdc" /></NavButton>
          <NavButton $w={17} aria-label="Последние расположения"><Chevron dir="down" size={10} /></NavButton>
          <NavButton $w={40} aria-label="Вверх"><ArrowIcon dir="up" /></NavButton>
          <PathBox>
            <NetFolderIcon />
            <CrumbSep><Chevron dir="right" /></CrumbSep>
            <Crumb>Сеть</Crumb>
            <CrumbSep><Chevron dir="right" /></CrumbSep>
            <Crumb>192.168.174.138</Crumb>
            <CrumbSep><Chevron dir="right" /></CrumbSep>
            <Crumb>private</Crumb>
            <PathButtons>
              <PathButton aria-label="Предыдущие расположения"><Chevron dir="down" size={14} /></PathButton>
              <PathButton $rule aria-label="Обновить"><RefreshIcon /></PathButton>
            </PathButtons>
          </PathBox>
          <SearchBox>
            <SearchInput placeholder="Поиск: private" aria-label="Поиск: private" />
            <SearchIcon />
          </SearchBox>
        </AddressRow>

        <CommandBar>
          <CommandButton $active aria-label="Область навигации"><PaneIcon /></CommandButton>
          <CommandButton $wide aria-label="Параметры папки"><FolderOptionsIcon /><Caret w={12} /></CommandButton>
          <CommandButton aria-label="Вырезать"><ScissorsIcon vivid /></CommandButton>
          <CommandButton aria-label="Копировать"><CopyIcon vivid /></CommandButton>
          <CommandButton aria-label="Вставить"><ClipboardIcon /></CommandButton>
          <CommandButton aria-label="Удалить"><CrossIcon color="#d9001b" thick={4} /></CommandButton>
          <CommandButton aria-label="Свойства"><TickIcon /></CommandButton>
          <CommandButton aria-label="Отправить по почте"><MailIcon /></CommandButton>
          <CommandRule />
        </CommandBar>

        <Body>
          <Tree>
            {treeItems.map((t) => (
              <TreeItem key={t.label} $gap={t.gap}>
                <TreeButton $root={t.root} $selected={t.selected}>
                  <TreeIcon>{t.icon}</TreeIcon>
                  {t.label}
                </TreeButton>
              </TreeItem>
            ))}
          </Tree>
          <Scrollbar>
            <ScrollButton $h={30} aria-label="Прокрутить вверх"><Chevron dir="up" /></ScrollButton>
            <ScrollSpace />
            <ScrollThumb />
            <ScrollButton $h={26} aria-label="Прокрутить вниз"><Chevron dir="down" /></ScrollButton>
          </Scrollbar>
          <Splitter />
          <FilePane>
            <FileTable>
              <thead>
                <tr>
                  <HeadCell $w={410} $first>
                    Имя
                    <SortMark><Chevron dir="up" size={12} stroke={1} /></SortMark>
                  </HeadCell>
                  <HeadCell $w={180}>Дата изменения</HeadCell>
                  <HeadCell $w={180}>Тип</HeadCell>
                  <HeadCell $w={120}>Размер</HeadCell>
                </tr>
              </thead>
              <tbody>
                <tr>
                  <Cell $name>
                    <FileName href="#"><WordIcon />настройка wordpress клиент.docx</FileName>
                  </Cell>
                  <Cell>21.03.2019 0:10</Cell>
                  <Cell>Документ Micros...</Cell>
                  <Cell $right>612 КБ</Cell>
                </tr>
              </tbody>
            </FileTable>
          </FilePane>
        </Body>

        <DetailsBar>
          1 элемент
          <DetailsRule />
          <ViewButtons>
            <ViewButton $active aria-label="Таблица"><DetailsViewIcon /></ViewButton>
            <ViewButton aria-label="Крупные значки"><PictureIcon /></ViewButton>
          </ViewButtons>
        </DetailsBar>

        <StatusBar>
          <StatusText>1 элемент (свободно на диске: 14,8 ГБ)</StatusText>
          <StatusField $w={88}>611 КБ</StatusField>
          <StatusField $w={184}>
            <GlobeIcon />Интернет
            <GripSlot><GripIcon /></GripSlot>
          </StatusField>
        </StatusBar>
      </Window>
    </>
  );
}
